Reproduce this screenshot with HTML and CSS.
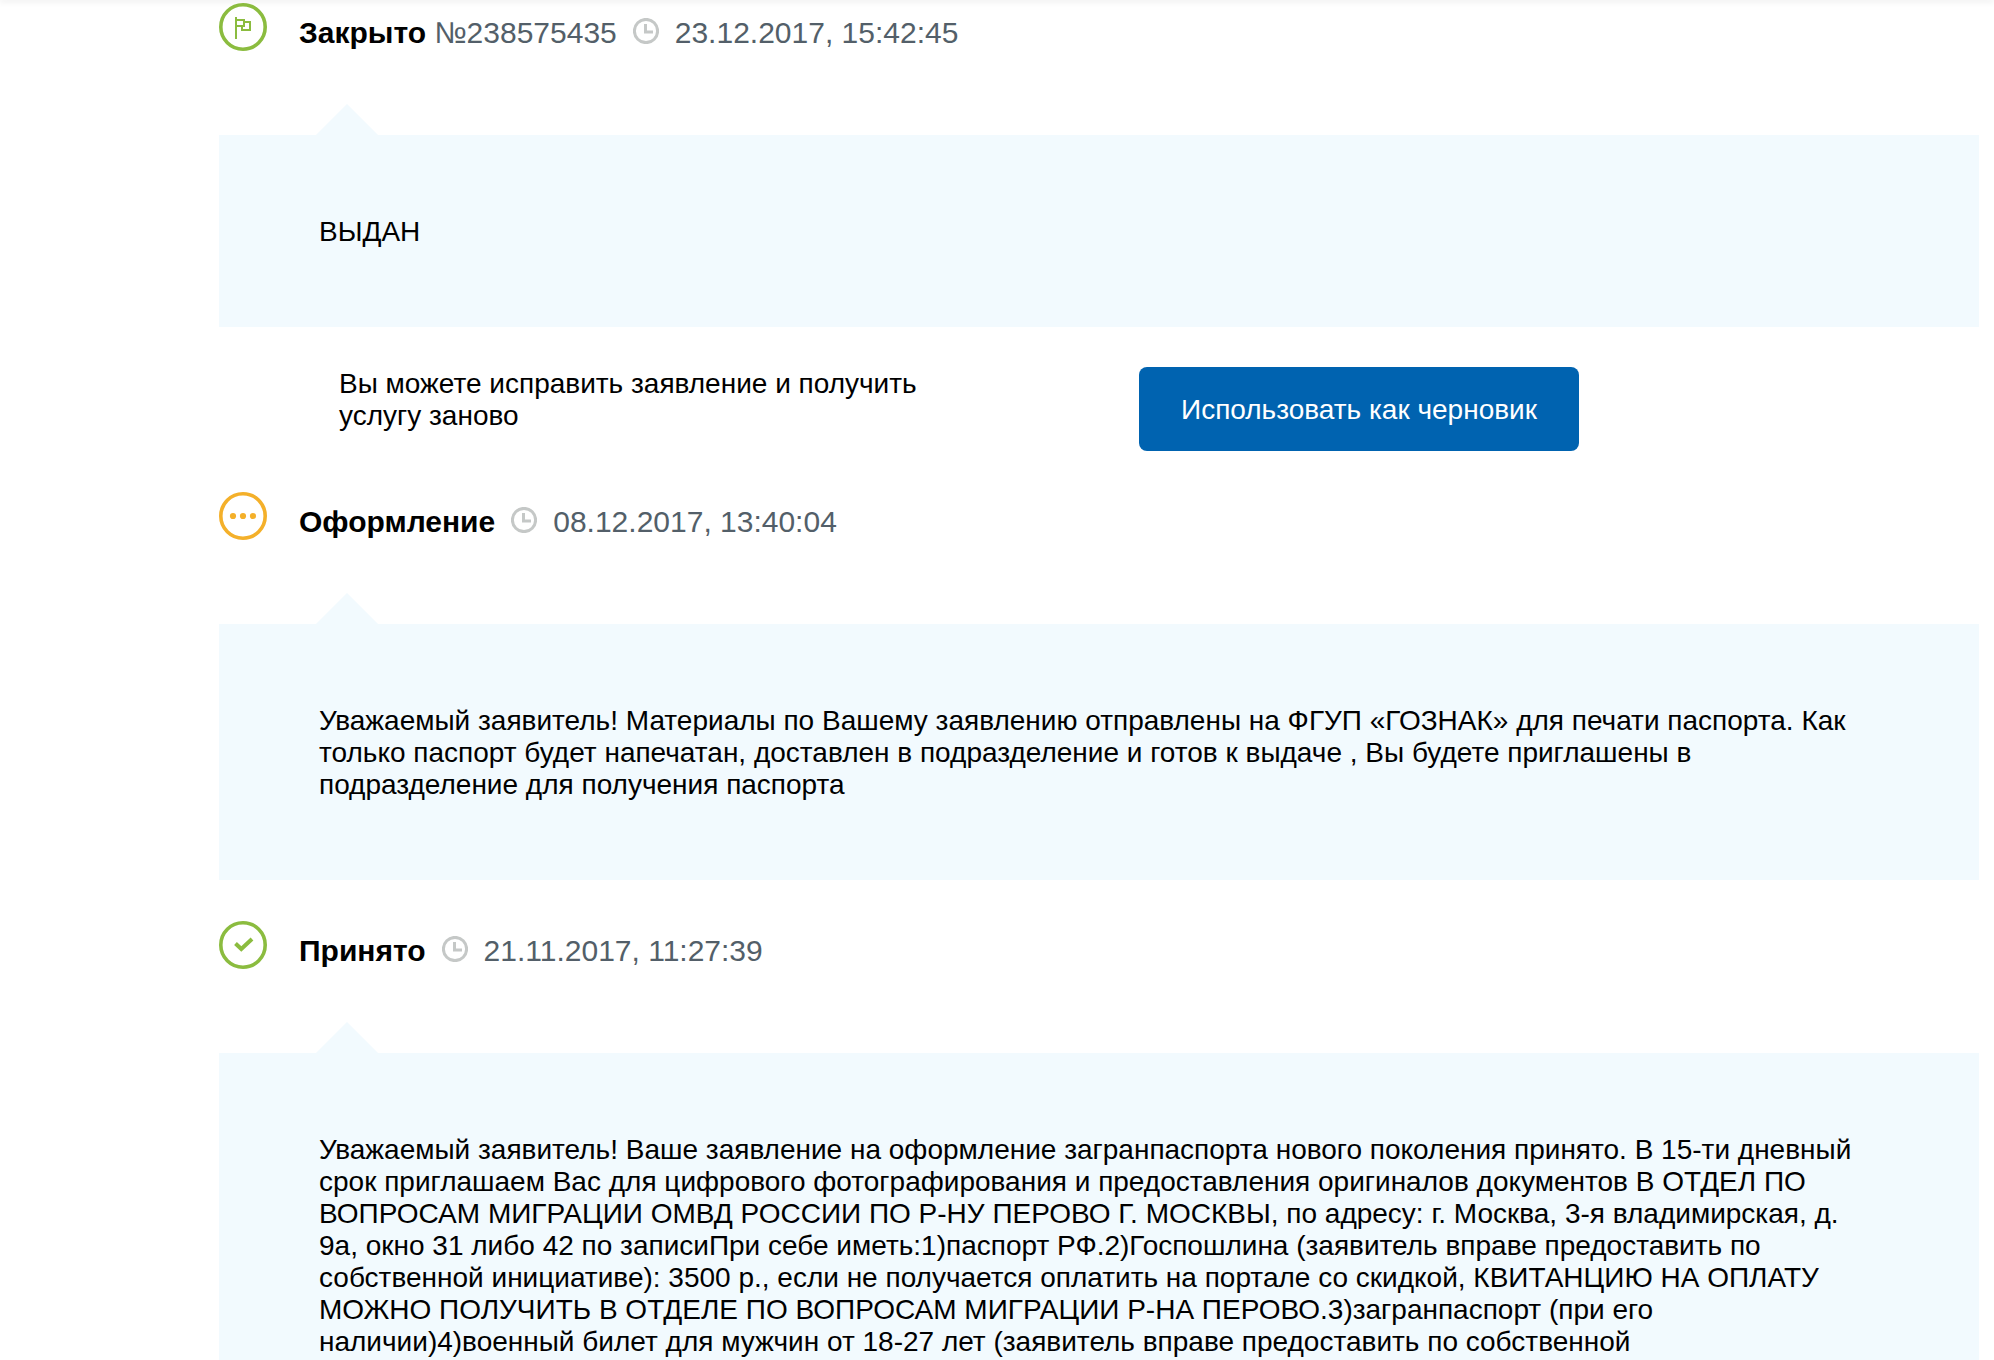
FILE: index.html
```html
<!DOCTYPE html>
<html lang="ru">
<head>
    <meta charset="UTF-8">
    <meta name="viewport" content="width=device-width, initial-scale=1.0">
    <title>История заявления</title>
    <link rel="stylesheet" href="styles.css">
</head>
<body>

    <div class="top-shadow"></div>

    <main class="history">

        <!-- Closed -->
        <section class="status">
            <div class="status-head">
                <svg class="status-icon green" viewBox="0 0 48 48" aria-hidden="true">
                    <circle cx="24" cy="24" r="22.2" stroke-width="3.6"/>
                    <path d="M17 14V36M17 17H25V23H17M25 19H31V27H23V23" stroke-width="2"/>
                </svg>
                <h2 class="status-title">Закрыто <span class="number">№238575435</span></h2>
                <svg class="clock" viewBox="0 0 26 26" aria-hidden="true">
                    <circle cx="13" cy="13" r="11.6"/>
                    <path d="M12.5 6V14H20"/>
                </svg>
                <time class="date">23.12.2017, 15:42:45</time>
            </div>
            <div class="message">
                <p>ВЫДАН</p>
            </div>
            <div class="draft">
                <p class="draft-text">Вы можете исправить заявление и получить услугу заново</p>
                <div>
                    <button type="button" class="draft-button">Использовать как черновик</button>
                </div>
            </div>
        </section>

        <!-- In progress -->
        <section class="status">
            <div class="status-head">
                <svg class="status-icon orange" viewBox="0 0 48 48" aria-hidden="true">
                    <circle cx="24" cy="24" r="22.2" stroke-width="3.6"/>
                    <circle class="dot" cx="14" cy="24" r="3.1"/>
                    <circle class="dot" cx="24" cy="24" r="3.1"/>
                    <circle class="dot" cx="34" cy="24" r="3.1"/>
                </svg>
                <h2 class="status-title">Оформление</h2>
                <svg class="clock" viewBox="0 0 26 26" aria-hidden="true">
                    <circle cx="13" cy="13" r="11.6"/>
                    <path d="M12.5 6V14H20"/>
                </svg>
                <time class="date">08.12.2017, 13:40:04</time>
            </div>
            <div class="message">
                <p>Уважаемый заявитель! Материалы по Вашему заявлению отправлены на ФГУП «ГОЗНАК» для печати паспорта. Как только паспорт будет напечатан, доставлен в подразделение и готов к выдаче , Вы будете приглашены в подразделение для получения паспорта</p>
            </div>
        </section>

        <!-- Accepted -->
        <section class="status">
            <div class="status-head">
                <svg class="status-icon green" viewBox="0 0 48 48" aria-hidden="true">
                    <circle cx="24" cy="24" r="22.2" stroke-width="3.6"/>
                    <path d="M16.5 22.5L22.3 28L33 18" stroke-width="4"/>
                </svg>
                <h2 class="status-title">Принято</h2>
                <svg class="clock" viewBox="0 0 26 26" aria-hidden="true">
                    <circle cx="13" cy="13" r="11.6"/>
                    <path d="M12.5 6V14H20"/>
                </svg>
                <time class="date">21.11.2017, 11:27:39</time>
            </div>
            <div class="message">
                <p>Уважаемый заявитель! Ваше заявление на оформление загранпаспорта нового поколения принято. В 15-ти дневный срок приглашаем Вас для цифрового фотографирования и предоставления оригиналов документов В ОТДЕЛ ПО ВОПРОСАМ МИГРАЦИИ ОМВД РОССИИ ПО Р-НУ ПЕРОВО Г. МОСКВЫ, по адресу: г. Москва, 3-я владимирская, д. 9а, окно 31 либо 42 по записиПри себе иметь:1)паспорт РФ.2)Госпошлина (заявитель вправе предоставить по собственной инициативе): 3500 р., если не получается оплатить на портале со скидкой, КВИТАНЦИЮ НА ОПЛАТУ МОЖНО ПОЛУЧИТЬ В ОТДЕЛЕ ПО ВОПРОСАМ МИГРАЦИИ Р-НА ПЕРОВО.3)загранпаспорт (при его наличии)4)военный билет для мужчин от 18-27 лет (заявитель вправе предоставить по собственной</p>
            </div>
        </section>

    </main>

</body>
</html>
```
FILE: styles.css
```css
* {
    box-sizing: border-box;
}

body {
    margin: 0;
    height: 100vh;
    overflow: hidden;
    background-color: #fff;
    color: #000;
    font-family: "Liberation Sans", Arial, sans-serif;
    font-size: 28px;
    line-height: 32px;
}

p {
    margin: 0;
}

.top-shadow {
    height: 0;
    box-shadow: 0 0 6px 1px rgba(0, 0, 0, 0.15);
}

.history {
    padding: 3px 15px 0 219px;
}

.status {
    margin-bottom: 41px;
}

.status-head {
    display: flex;
    align-items: flex-start;
    height: 132px;
}

.status-icon {
    width: 48px;
    height: 48px;
    margin-right: 32px;
    fill: none;
}

.green {
    stroke: #8bbc3f;
}

.orange {
    stroke: #f4b02a;
}

.dot {
    fill: #f4b02a;
    stroke: none;
}

.status-title,
.date {
    margin: 13px 0 0;
    font-size: 30px;
    line-height: 34px;
}

.number,
.date {
    color: #535f69;
    font-weight: normal;
}

.clock {
    width: 26px;
    height: 26px;
    margin: 15px 16px 0;
    fill: none;
    stroke: #c5c8c7;
    stroke-width: 3;
}

.message {
    position: relative;
    padding: 81px 100px 79px;
    background-color: #f2fafe;
}

/* pointer above the message */
.message::before {
    content: "";
    position: absolute;
    left: 97px;
    bottom: 100%;
    border: 31px solid transparent;
    border-top: 0;
    border-bottom-color: #f2fafe;
}

.draft {
    display: grid;
    grid-template-columns: 1fr 1fr;
    padding: 40px 40px 0 120px;
}

.draft-text {
    padding: 1px 160px 0 0;
}

.draft-button {
    padding: 27px 42px 25px;
    border: none;
    border-radius: 8px;
    background-color: #0063b0;
    color: #fff;
    font-family: inherit;
    font-size: 28px;
    line-height: 32px;
    cursor: pointer;
}

.draft-button:hover {
    background-color: #00559a;
}
```
